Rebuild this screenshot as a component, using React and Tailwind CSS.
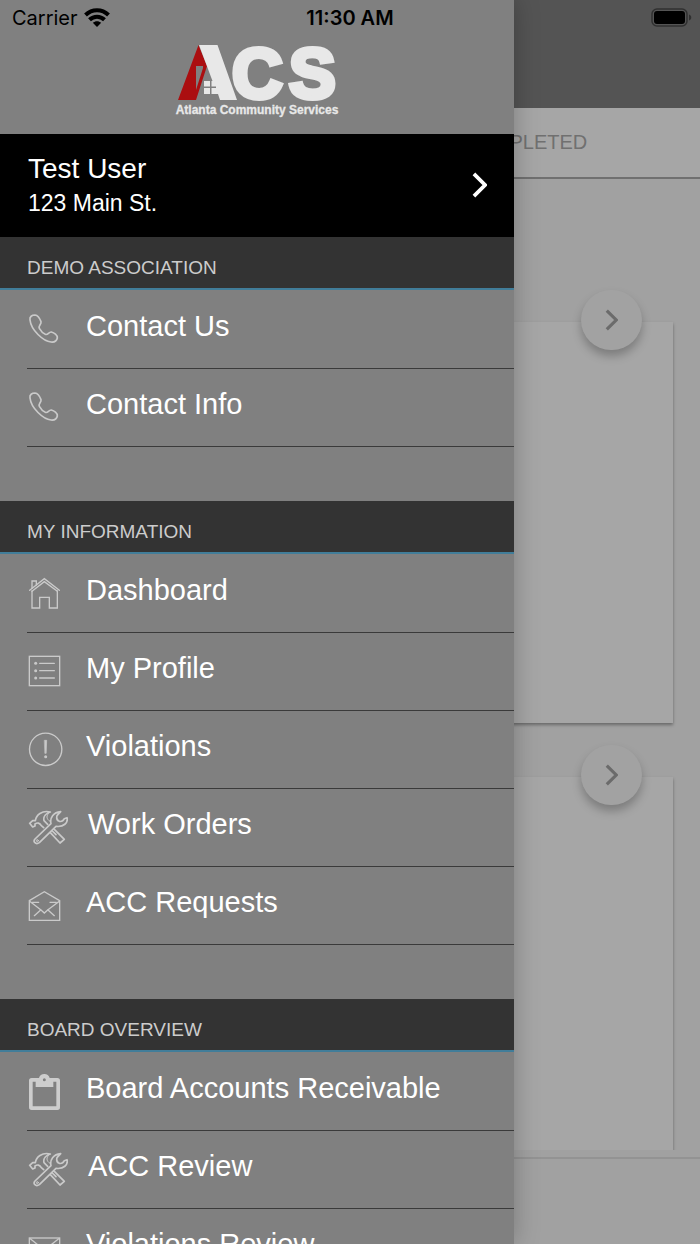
import React from 'react';

const iconProps = {
  fill: 'none',
  stroke: '#cacaca',
  strokeWidth: 5,
  strokeLinejoin: 'round',
  strokeLinecap: 'round',
  'aria-hidden': true,
};

function PhoneIcon() {
  return (
    <svg {...iconProps} viewBox="82 70 96 96" className="h-8 w-8">
      <path d="M88 88C86 78 94 73 103 73C112 74 118 85 121 93C123 100 112 106 116 113C120 120 127 128 134 131C142 134 144 123 152 124C160 126 171 133 170 142C168 151 160 155 151 154C128 152 91 118 88 88Z" />
    </svg>
  );
}

function HomeIcon() {
  return (
    <svg {...iconProps} viewBox="84 50 99 99" className="h-[33px] w-[33px]" strokeLinejoin="miter" strokeWidth="4">
      <path d="M89 90L133 55L178 90M96 93L133 64L172 93" />
      <path d="M96 84V62H109V74" />
      <path d="M96 92V143H119V111H148V143H172V92" />
    </svg>
  );
}

function ListIcon() {
  return (
    <svg {...iconProps} viewBox="84 286 99 99" className="h-[33px] w-[33px]" strokeLinejoin="miter" strokeWidth="4">
      <rect x="88" y="290" width="91" height="88" />
      <path d="M119 311H163M119 333H163M119 355H163" />
      <g fill="#c9c9c9" stroke="none">
        <circle cx="107" cy="311" r="4.5" />
        <circle cx="107" cy="333" r="4.5" />
        <circle cx="107" cy="355" r="4.5" />
      </g>
    </svg>
  );
}

function AlertIcon() {
  return (
    <svg {...iconProps} viewBox="84 516 105 105" className="h-[35px] w-[35px]" strokeWidth="4">
      <circle cx="137" cy="568" r="48.500" />
      <path d="M134 541H140L138.500 580H135.500Z" fill="#c9c9c9" strokeWidth="2" />
      <circle cx="137" cy="590" r="4.500" fill="#c9c9c9" stroke="none" />
    </svg>
  );
}

function ToolsIcon() {
  return (
    <svg {...iconProps} viewBox="84 60 120 105" className="h-[35px] w-10">
      <path d="M105 147L153 101C149 83 160 67 182 65L171 77C169 84 171 91 178 94C186 96 190 92 193 86L201 83C205 98 191 112 168 109L118 158C107 165 98 155 105 147Z" />
      <circle cx="112" cy="152" r="3" strokeWidth="3" />
      <path d="M143 103L132 92C129 80 138 70 151 66C126 60 108 75 106 92L98 92L89 100L98 111L105 108L105 102C112 97 119 98 124 107L131 113" />
      <path d="M148 68C138 76 138 87 150 94" strokeWidth="3" />
      <path d="M151 128L180 159L193 148L163 118M157 123L168 134" />
    </svg>
  );
}

function OpenMailIcon() {
  return (
    <svg {...iconProps} viewBox="84 300 99 96" className="h-8 w-[33px]" strokeLinejoin="miter" strokeWidth="4">
      <path d="M88 332L133 305L179 332V391H88Z" />
      <path d="M89 334L123 360L133 369L143 360L178 334" />
      <path d="M103 377L122 360M163 377L144 360M97 337H116M150 337H169" />
    </svg>
  );
}

function ClipboardIcon() {
  return (
    <svg viewBox="84 99 99 111" className="h-[37px] w-[33px]" fill="#cdcdcd" aria-hidden="true">
      <path
        fillRule="evenodd"
        d="M95 114H117C119 106 125 102 133 102S147 106 149 114H172Q180 114 180 122V202Q180 210 172 210H95Q87 210 87 202V122Q87 114 95 114ZM98 125V199H169V125H160V141H107V125ZM133 115A4.500 4.500 0 1 0 133 124A4.500 4.500 0 1 0 133 115Z"
      />
    </svg>
  );
}

function MailIcon() {
  return (
    <svg {...iconProps} viewBox="84 592 99 72" className="h-6 w-[33px]" strokeLinejoin="miter" strokeWidth="4">
      <rect x="88" y="598" width="91" height="62" />
      <path d="M89 599L133 634L178 599" />
    </svg>
  );
}

function Chevron({ className, strokeWidth }) {
  return (
    <svg viewBox="0 0 16 28" className={className} fill="none" stroke="currentColor" strokeWidth={strokeWidth} aria-hidden="true">
      <path d="M2 2L14 14L2 26" />
    </svg>
  );
}

function Logo() {
  return (
    <svg viewBox="170 24 174 96" className="h-24 w-[174px]" role="img" aria-label="ACS Atlanta Community Services">
      <path fill="#ab0e10" fillRule="evenodd" d="M198.500 45L207 66L196 100H178ZM196 66V90L203 68V66Z" />
      <path fill="#e8e8e8" d="M199 45H217.500L237 100H220L218 94H211.500V88H216V86.500H211.500V81H212.500Z" />
      <path fill="#e8e8e8" d="M204 81H210V86.500H204ZM204 88H210V94H204Z" />
      <g fill="#e8e8e8" stroke="#e8e8e8" fontFamily="Liberation Sans, Arial, sans-serif" fontWeight="bold">
        <text x="232" y="97.500" fontSize="70" strokeWidth="5">C</text>
        <text x="289" y="97.500" fontSize="70" strokeWidth="5">S</text>
        <text x="257" y="114" fontSize="12" strokeWidth="0.300" textAnchor="middle">Atlanta Community Services</text>
      </g>
    </svg>
  );
}

function StatusBar() {
  return (
    <div className="absolute inset-x-0 top-0 z-20 grid h-9 grid-cols-3 items-center px-3 font-[Inter,sans-serif] text-[20px] leading-6 text-black">
      <div className="flex items-center gap-1.5">
        <span>Carrier</span>
        <svg viewBox="0 0 26 20" className="h-5 w-[26px]" aria-label="Wi-Fi">
          <g fill="none" stroke="#000" strokeWidth="4">
            <path d="M1.500 7C8 0.600 18 0.600 24.500 7" />
            <path d="M5.500 11.800C9.800 7.600 16.200 7.600 20.500 11.800" />
          </g>
          <path d="M8.800 14.800C11.200 12.600 14.800 12.600 17.200 14.800L13 19Z" />
        </svg>
      </div>
      <div className="text-center font-semibold">11:30 AM</div>
      <div className="flex justify-end">
        <svg viewBox="0 0 41 20" className="-mr-1 h-5 w-[41px]" aria-label="Battery full">
          <rect x="1" y="1" width="35" height="17" rx="5" fill="none" stroke="#303030" strokeWidth="1.500" />
          <rect x="3" y="3" width="31" height="13" rx="3" />
          <path d="M38 6.500C41 7.500 41 11.500 38 12.500Z" fill="#303030" />
        </svg>
      </div>
    </div>
  );
}

const sections = [
  {
    title: 'DEMO ASSOCIATION',
    items: [
      ['Contact Us', PhoneIcon],
      ['Contact Info', PhoneIcon],
    ],
  },
  {
    title: 'MY INFORMATION',
    items: [
      ['Dashboard', HomeIcon],
      ['My Profile', ListIcon],
      ['Violations', AlertIcon],
      ['Work Orders', ToolsIcon],
      ['ACC Requests', OpenMailIcon],
    ],
  },
  {
    title: 'BOARD OVERVIEW',
    items: [
      ['Board Accounts Receivable', ClipboardIcon],
      ['ACC Review', ToolsIcon],
      ['Violations Review', MailIcon],
    ],
  },
];

function Drawer() {
  return (
    <aside className="absolute inset-y-0 left-0 z-10 w-[514px] max-w-full overflow-hidden bg-[#808080] shadow-[0_0_24px_rgba(0,0,0,0.25)]">
      <div className="flex h-[134px] justify-center pt-6">
        <Logo />
      </div>
      <button type="button" className="flex h-[103px] w-full items-center justify-between bg-black pr-[27px] pb-px pl-7 text-left text-white">
        <span className="flex flex-col">
          <span className="text-[28px] leading-9">Test User</span>
          <span className="text-[23px] leading-8">123 Main St.</span>
        </span>
        <Chevron className="h-[26px] w-[15px]" strokeWidth="4" />
      </button>
      <nav>
        {sections.map((section) => (
          <section key={section.title}>
            <h2 className="flex h-[53px] items-center border-b-2 border-[#417d99] bg-[#333] pt-2.5 pl-[27px] text-[19px] leading-6 text-[#ccc]">
              {section.title}
            </h2>
            <ul className="pt-px pb-[54px] pl-[27px]">
              {section.items.map(([label, Icon]) => (
                <li key={label}>
                  <a href="#" className="flex h-[78px] items-center gap-5 border-b border-[#3a3a3a] pl-px text-[29px] leading-8 text-white">
                    <span className="flex min-w-[38px] items-center">
                      <Icon />
                    </span>
                    <span className="pb-2">{label}</span>
                  </a>
                </li>
              ))}
            </ul>
          </section>
        ))}
      </nav>
    </aside>
  );
}

function Card() {
  return (
    <article className="relative mr-[27px] ml-[27px] h-[401px] shrink-0 bg-[#a6a6a6] shadow-[0_2px_3px_rgba(0,0,0,0.35)]">
      <button
        type="button"
        aria-label="Open"
        className="absolute -top-8 right-[31px] flex h-[60px] w-[61px] items-center justify-center rounded-full bg-[#a2a2a2] text-[#6b6b6b] shadow-[0_6px_10px_rgba(0,0,0,0.25)]"
      >
        <Chevron className="h-[22px] w-[13px]" strokeWidth="4" />
      </button>
    </article>
  );
}

export default function App() {
  return (
    <div className="relative h-screen overflow-hidden bg-[#a1a1a1] font-['Liberation_Sans',Arial,sans-serif]">
      <StatusBar />
      <main className="flex h-full flex-col">
        <header className="h-[108px] shrink-0 bg-[#545454]" />
        <div className="grid h-[71px] shrink-0 grid-cols-2 border-b-2 border-[#707070] bg-[#a6a6a6]">
          <button type="button" className="col-start-2 pb-0.5 text-[20px] text-[#707070]">
            COMPLETED
          </button>
        </div>
        <div className="flex min-h-0 flex-1 flex-col gap-[54px] overflow-hidden pt-[143px]">
          <Card />
          <Card />
        </div>
        <footer className="h-[94px] shrink-0 pt-[7px]">
          <div className="h-full border-t-2 border-[#939393]" />
        </footer>
      </main>
      <Drawer />
    </div>
  );
}
